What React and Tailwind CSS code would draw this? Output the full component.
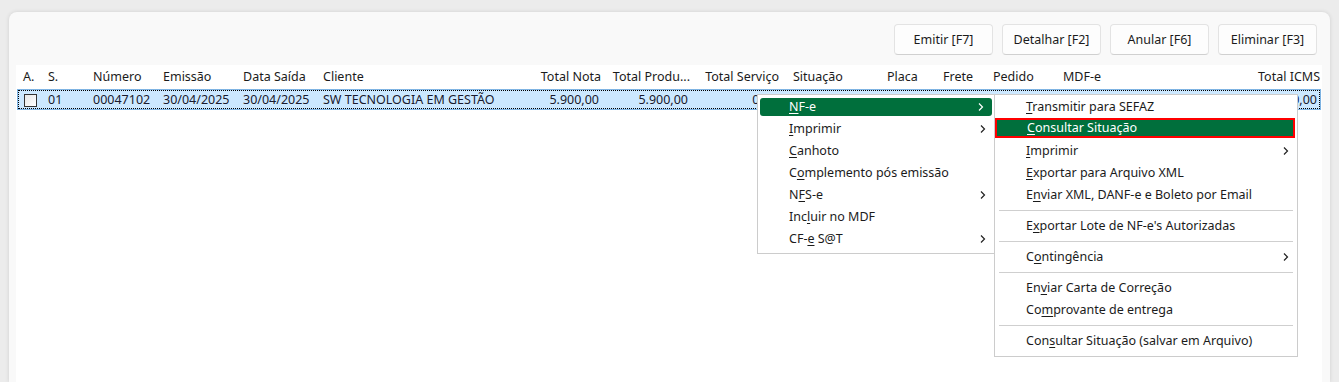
import { Fragment } from "react";

const columns = [
  { label: "A.", w: "w-[25px]", cls: "pl-[4px]" },
  { label: "S.", w: "w-[45px]", cls: "pl-[4px]" },
  { label: "Número", w: "w-[70px]", cls: "pl-[4px]" },
  { label: "Emissão", w: "w-[80px]", cls: "pl-[4px]" },
  { label: "Data Saída", w: "w-[80px]", cls: "pl-[4px]" },
  { label: "Cliente", w: "w-[200px]", cls: "pl-[4px]" },
  { label: "Total Nota", w: "w-[86px]", cls: "pr-[4px] text-right", shift: true },
  { label: "Total Produ...", w: "w-[89px]", cls: "pr-[4px] text-right", shift: true },
  { label: "Total Serviço", w: "w-[89px]", cls: "pr-[4px] text-right", shift: true },
  { label: "Situação", w: "w-[100px]", cls: "pl-[10px]" },
  { label: "Placa", w: "w-[56px]", cls: "pl-[4px]" },
  { label: "Frete", w: "w-[50px]", cls: "pl-[4px]" },
  { label: "Pedido", w: "w-[70px]", cls: "pl-[4px]" },
  { label: "MDF-e", w: "flex-1", cls: "pl-[4px]" },
  { label: "Total ICMS", w: "w-[100px]", cls: "pr-[2px] text-right" },
];

const rowValues = [
  null,
  "01",
  "00047102",
  "30/04/2025",
  "30/04/2025",
  "SW TECNOLOGIA EM GESTÃO",
  "5.900,00",
  "5.900,00",
  "0,00",
  "",
  "",
  "",
  "",
  "",
  "0,00",
];

const mainMenu = [
  { text: "NF-e", u: 0, sub: true, active: true },
  { text: "Imprimir", u: 0, sub: true },
  { text: "Canhoto", u: 0 },
  { text: "Complemento pós emissão", u: 1 },
  { text: "NFS-e", u: 1, sub: true },
  { text: "Incluir no MDF", u: 3 },
  { text: "CF-e S@T", u: 3, sub: true },
];

const nfeMenu = [
  { text: "Transmitir para SEFAZ", u: 0 },
  { text: "Consultar Situação", u: 0, focus: true },
  { text: "Imprimir", u: 0, sub: true },
  { text: "Exportar para Arquivo XML", u: 0 },
  { text: "Enviar XML, DANF-e e Boleto por Email", u: 1 },
  { sep: true },
  { text: "Exportar Lote de NF-e's Autorizadas", u: 1 },
  { sep: true },
  { text: "Contingência", u: 1, sub: true },
  { sep: true },
  { text: "Enviar Carta de Correção", u: 2 },
  { text: "Comprovante de entrega", u: 2 },
  { sep: true },
  { text: "Consultar Situação (salvar em Arquivo)", u: 3 },
];

function Label({ text, u }) {
  return (
    <span>
      {text.slice(0, u)}
      <span className="underline underline-offset-2">{text[u]}</span>
      {text.slice(u + 1)}
    </span>
  );
}

function Chevron({ light }) {
  return (
    <svg width="6" height="9" viewBox="0 0 6 9" className="absolute right-[8px] top-1/2 -translate-y-1/2">
      <polyline points="1,1 4.5,4.5 1,8" fill="none" stroke={light ? "#ffffff" : "#222222"} strokeWidth="1.2" />
    </svg>
  );
}

function MenuItem({ item }) {
  if (item.sep) {
    return (
      <div className="flex h-[9px] items-center px-[4px]">
        <div className="h-px w-full bg-[#cfcfcf]" />
      </div>
    );
  }
  if (item.focus) {
    return (
      <div className="h-[22px]">
        <div className="relative mr-[2px] flex h-[20px] items-center border-2 border-[#ff0000] bg-[#006f3c] pl-[30px] text-white">
          <Label text={item.text} u={item.u} />
          {item.sub && <Chevron light />}
        </div>
      </div>
    );
  }
  if (item.active) {
    return (
      <div className="flex h-[22px] items-center">
        <div className="relative mx-[2px] flex h-[18px] w-full items-center rounded-[3px] bg-[#006f3c] pl-[29px] text-white">
          <Label text={item.text} u={item.u} />
          {item.sub && <Chevron light />}
        </div>
      </div>
    );
  }
  return (
    <div className="relative flex h-[22px] items-center pl-[31px] text-[#1b1b1b]">
      <Label text={item.text} u={item.u} />
      {item.sub && <Chevron />}
    </div>
  );
}

function Button({ children }) {
  return (
    <button className="h-[31px] w-[99px] rounded-[4px] border border-[#e3e3e3] border-b-[#d0d0d0] bg-[#fdfdfd] pt-[2px] text-[12.5px] text-[#1b1b1b]">
      {children}
    </button>
  );
}

export default function App() {
  return (
    <div
      className="relative h-[382px] w-[1339px] overflow-hidden bg-[#ececec] px-[9px] pt-[12px] text-[12.5px]"
      style={{ fontFamily: '"Noto Sans", "Open Sans", sans-serif' }}
    >
      <div className="flex h-[370px] flex-col rounded-t-[8px] bg-[#f9f9f9] shadow-[0_0_4px_rgba(0,0,0,0.12)]">
        <div className="flex h-[53px] items-center justify-end gap-[9px] pr-[13px] pt-[1px]">
          <Button>Emitir [F7]</Button>
          <Button>Detalhar [F2]</Button>
          <Button>Anular [F6]</Button>
          <Button>Eliminar [F3]</Button>
        </div>
        <div className="ml-[7px] mr-[8px] flex-1 bg-white">
          <div className="flex h-[24px] items-center pl-[3px] pt-[1px] text-[#1b1b1b]">
            {columns.map((c) => (
              <div key={c.label} className={`${c.w} ${c.cls} shrink-0 whitespace-nowrap`}>
                {c.label}
              </div>
            ))}
          </div>
          <div className="mx-[1px] h-[21px] border border-[#7fb4e3] bg-[#cce8ff]">
            <div className="flex h-full items-center border border-dotted border-[#000000] pl-[1px] pt-[1px] text-[#1a1a2e]">
              {columns.map((c, i) => (
                <div key={c.label} className={`${c.w} ${c.cls} shrink-0 whitespace-nowrap`}>
                  {i === 0 ? (
                    <div className="h-[13px] w-[13px] border border-[#333333] bg-gradient-to-br from-[#e6e6e6] to-white" />
                  ) : c.shift ? (
                    <span className="mr-[3px] inline-block">{rowValues[i]}</span>
                  ) : (
                    <span className="-ml-[1px]">{rowValues[i]}</span>
                  )}
                </div>
              ))}
            </div>
          </div>
        </div>
      </div>

      <div className="absolute left-[757px] top-[94px] w-[238px] border border-[#cccccc] bg-white pb-[3px] pt-px">
        {mainMenu.map((item) => (
          <MenuItem key={item.text} item={item} />
        ))}
      </div>

      <div className="absolute left-[994px] top-[94px] w-[304px] border border-[#cccccc] bg-white pb-[4px] pt-px">
        {nfeMenu.map((item, i) => (
          <Fragment key={i}>
            <MenuItem item={item} />
          </Fragment>
        ))}
      </div>
    </div>
  );
}
